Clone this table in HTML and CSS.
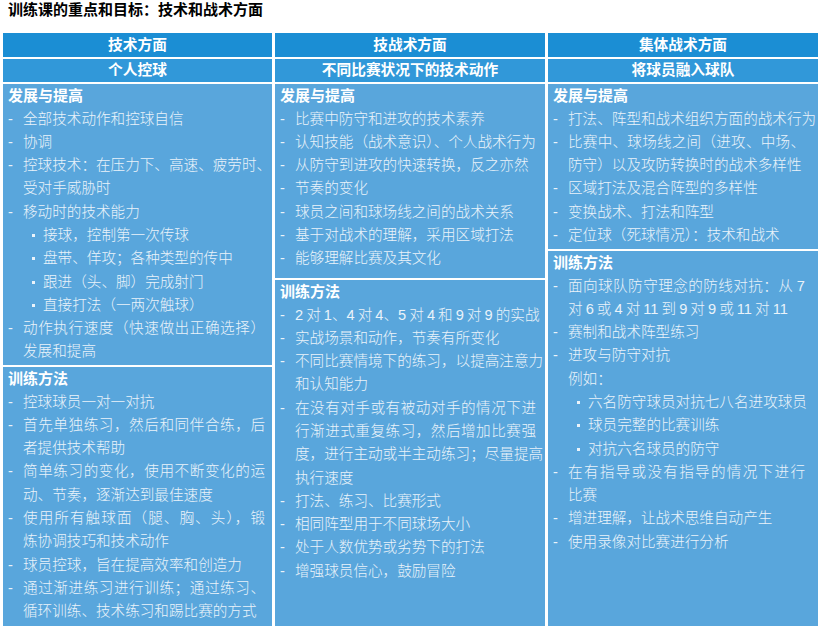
FILE: index.html
```html
<!DOCTYPE html>
<html lang="zh-CN">
<head>
<meta charset="utf-8">
<title>训练课的重点和目标</title>
<link rel="stylesheet" href="styles.css">
</head>
<body>
<h1 class="title">训练课的重点和目标：技术和战术方面</h1>
<div class="table">
  <div class="head1">技术方面</div>
  <div class="head1">技战术方面</div>
  <div class="head1">集体战术方面</div>
  <div class="head2">个人控球</div>
  <div class="head2">不同比赛状况下的技术动作</div>
  <div class="head2">将球员融入球队</div>

  <div class="col col-a">
    <section class="sec top">
      <h2>发展与提高</h2>
      <ul class="list">
        <li class="d"><span class="t">全部技术动作和控球自信</span></li>
        <li class="d"><span class="t">协调</span></li>
        <li class="d"><span class="t"><span class="ln j">控球技术：在压力下、高速、疲劳时、</span><span class="ln">受对手威胁时</span></span></li>
        <li class="d"><span class="t">移动时的技术能力</span></li>
        <li class="s"><span class="t">接球，控制第一次传球</span></li>
        <li class="s"><span class="t">盘带、佯攻；各种类型的传中</span></li>
        <li class="s"><span class="t">跟进（头、脚）完成射门</span></li>
        <li class="s"><span class="t">直接打法（一两次触球）</span></li>
        <li class="d"><span class="t"><span class="ln j">动作执行速度（快速做出正确选择）</span><span class="ln">发展和提高</span></span></li>
      </ul>
    </section>
    <section class="sec bottom">
      <h2>训练方法</h2>
      <ul class="list">
        <li class="d"><span class="t">控球球员一对一对抗</span></li>
        <li class="d"><span class="t"><span class="ln j">首先单独练习，然后和同伴合练，后</span><span class="ln">者提供技术帮助</span></span></li>
        <li class="d"><span class="t"><span class="ln j">简单练习的变化，使用不断变化的运</span><span class="ln">动、节奏，逐渐达到最佳速度</span></span></li>
        <li class="d"><span class="t"><span class="ln j">使用所有触球面（腿、胸、头），锻</span><span class="ln">炼协调技巧和技术动作</span></span></li>
        <li class="d"><span class="t">球员控球，旨在提高效率和创造力</span></li>
        <li class="d"><span class="t"><span class="ln j">通过渐进练习进行训练；通过练习、</span><span class="ln">循环训练、技术练习和踢比赛的方式</span></span></li>
      </ul>
    </section>
  </div>

  <div class="col col-b">
    <section class="sec top">
      <h2>发展与提高</h2>
      <ul class="list">
        <li class="d"><span class="t">比赛中防守和进攻的技术素养</span></li>
        <li class="d"><span class="t">认知技能（战术意识）、个人战术行为</span></li>
        <li class="d"><span class="t">从防守到进攻的快速转换，反之亦然</span></li>
        <li class="d"><span class="t">节奏的变化</span></li>
        <li class="d"><span class="t">球员之间和球场线之间的战术关系</span></li>
        <li class="d"><span class="t">基于对战术的理解，采用区域打法</span></li>
        <li class="d"><span class="t">能够理解比赛及其文化</span></li>
      </ul>
    </section>
    <section class="sec bottom">
      <h2>训练方法</h2>
      <ul class="list">
        <li class="d"><span class="t num">2 对 1、4 对 4、5 对 4 和 9 对 9 的实战</span></li>
        <li class="d"><span class="t">实战场景和动作，节奏有所变化</span></li>
        <li class="d"><span class="t"><span class="ln j">不同比赛情境下的练习，以提高注意力</span><span class="ln">和认知能力</span></span></li>
        <li class="d"><span class="t"><span class="ln j">在没有对手或有被动对手的情况下进</span><span class="ln j">行渐进式重复练习，然后增加比赛强</span><span class="ln j">度，进行主动或半主动练习；尽量提高</span><span class="ln">执行速度</span></span></li>
        <li class="d"><span class="t">打法、练习、比赛形式</span></li>
        <li class="d"><span class="t">相同阵型用于不同球场大小</span></li>
        <li class="d"><span class="t">处于人数优势或劣势下的打法</span></li>
        <li class="d"><span class="t">增强球员信心，鼓励冒险</span></li>
      </ul>
    </section>
  </div>

  <div class="col col-c">
    <section class="sec top">
      <h2>发展与提高</h2>
      <ul class="list">
        <li class="d"><span class="t">打法、阵型和战术组织方面的战术行为</span></li>
        <li class="d"><span class="t"><span class="ln j">比赛中、球场线之间（进攻、中场、</span><span class="ln">防守）以及攻防转换时的战术多样性</span></span></li>
        <li class="d"><span class="t">区域打法及混合阵型的多样性</span></li>
        <li class="d"><span class="t">变换战术、打法和阵型</span></li>
        <li class="d"><span class="t">定位球（死球情况）：技术和战术</span></li>
      </ul>
    </section>
    <section class="sec bottom">
      <h2>训练方法</h2>
      <ul class="list">
        <li class="d"><span class="t num"><span class="ln j">面向球队防守理念的防线对抗：从 7</span><span class="ln">对 6 或 4 对 11 到 9 对 9 或 11 对 11</span></span></li>
        <li class="d"><span class="t">赛制和战术阵型练习</span></li>
        <li class="d"><span class="t">进攻与防守对抗</span></li>
        <li class="p"><span class="t">例如：</span></li>
        <li class="s"><span class="t">六名防守球员对抗七八名进攻球员</span></li>
        <li class="s"><span class="t">球员完整的比赛训练</span></li>
        <li class="s"><span class="t">对抗六名球员的防守</span></li>
        <li class="d"><span class="t"><span class="ln j">在有指导或没有指导的情况下进行</span><span class="ln">比赛</span></span></li>
        <li class="d"><span class="t">增进理解，让战术思维自动产生</span></li>
        <li class="d"><span class="t">使用录像对比赛进行分析</span></li>
      </ul>
    </section>
  </div>
</div>
</body>
</html>
```

FILE: styles.css
```css
body {
  margin: 0;
  background: #ffffff;
  font-family: "Liberation Sans", "Noto Sans CJK SC", sans-serif;
  color: #000000;
}

.title {
  margin: 0;
  padding-left: 8px;
  font-size: 15px;
  line-height: 20px;
  font-weight: 700;
  color: #000000;
}

.table {
  margin: 13px 0 0 3px;
  display: grid;
  grid-template-columns: 269px 270px 270px;
  grid-template-rows: 24px 23px 542px;
  column-gap: 3px;
  row-gap: 2px;
}

.head1,
.head2 {
  color: #ffffff;
  font-weight: 700;
  font-size: 14.7px;
  text-align: center;
}

.head1 {
  background: #1b8ed4;
  line-height: 24px;
}

.head2 {
  background: #3198d9;
  line-height: 23px;
}

.col {
  display: flex;
  flex-direction: column;
  gap: 2px;
}

.sec {
  box-sizing: border-box;
  background: #59a6dc;
  color: #eaf3fa;
  padding: 2px 7px 0 5px;
}

.sec.bottom {
  flex: 1;
}

.col-a .top { height: 281px; }
.col-b .top { height: 194px; }
.col-c .top { height: 165px; }

.col-b .sec { padding-right: 9px; }
.col-c .sec { padding-right: 13px; }

.sec h2 {
  margin: 0 0 1.5px;
  font-size: 15px;
  line-height: 20px;
  font-weight: 700;
  color: #ffffff;
}

.list {
  list-style: none;
  margin: 0;
  padding: 0;
  font-size: 14.6px;
  font-weight: 300;
  line-height: 23.3px;
}

.list li {
  display: flex;
  white-space: nowrap;
}

.list li::before {
  flex: none;
}

.list .d::before {
  content: "-";
  width: 15px;
  font-family: "Liberation Sans", sans-serif;
}

.list .s {
  padding-left: 24px;
  align-items: center;
}

.list .s::before {
  content: "";
  width: 3px;
  height: 3px;
  margin-right: 8px;
  background: #eaf3fa;
}

.list .p {
  padding-left: 15px;
}

.t {
  flex: 1;
  min-width: 0;
}

.num {
  word-spacing: -1px;
}

.ln {
  display: block;
}

.j {
  text-align-last: justify;
}
```
